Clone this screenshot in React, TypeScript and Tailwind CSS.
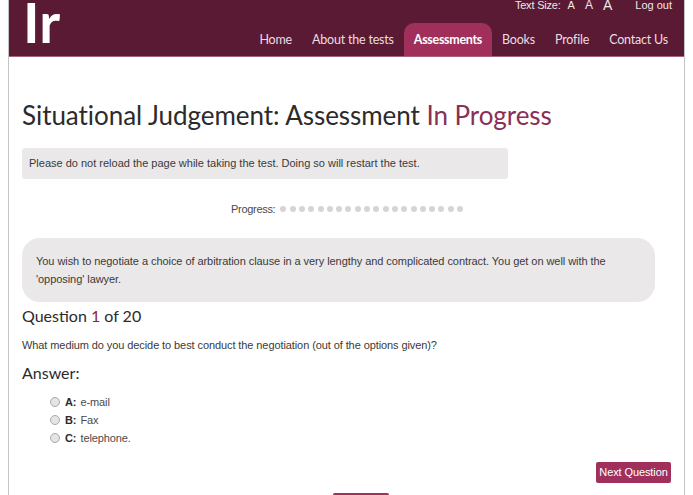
const navItems = ['Home', 'About the tests', 'Assessments', 'Books', 'Profile', 'Contact Us'];
const options = [
  { key: 'A:', text: 'e-mail' },
  { key: 'B:', text: 'Fax' },
  { key: 'C:', text: 'telephone.' },
];
const dots = Array.from({ length: 20 }, (_, i) => i);

const headingFont = "font-['Lato',sans-serif]";

export default function App() {
  return (
    <div className="h-[495px] overflow-hidden bg-white font-['Liberation_Sans',sans-serif]">
      <div className="mx-[8px] h-[495px] w-[677px] border-x border-x-[#c4c4c4]">
        {/* Header */}
        <header className="flex h-[57px] justify-between border-b border-b-[#a8617c] bg-[#5a1a33] text-white">
          <div className="ml-[14px] font-['Lato',sans-serif] text-[56px] leading-[44px] font-bold">Ir</div>
          <div className="flex flex-col items-end">
            <div className="flex h-[23px] items-start pr-[12px] text-[11px] leading-[10px] text-[#f1e6ea]">
              <span className="tracking-[-0.2px]">Text Size:</span>
              <span className="ml-[7px]">A</span>
              <span className="ml-[10px] text-[12px]">A</span>
              <span className="ml-[10px] text-[14px]">A</span>
              <span className="ml-[23px]">Log out</span>
            </div>
            <nav className={`flex h-[33px] pr-[6px] text-[12.5px] tracking-[-0.2px] text-[#eadde2] ${headingFont}`}>
              {navItems.map((item) => (
                <a
                  key={item}
                  className={
                    item === 'Assessments'
                      ? 'rounded-t-[10px] bg-[#a12f5c] px-[10px] pt-[8px] font-bold tracking-[-0.3px] text-white'
                      : 'px-[10px] pt-[8px]'
                  }
                >
                  {item}
                </a>
              ))}
            </nav>
          </div>
        </header>

        <main className="px-[13px]">
          <h1 className={`mt-[38px] text-[26px] leading-[40px] tracking-[-0.05px] text-[#2b2b2b] ${headingFont}`}>
            Situational Judgement: Assessment <span className="text-[#8a2f55]">In Progress</span>
          </h1>

          <div className="mt-[13px] h-[31px] w-[486px] rounded-[3px] bg-[#ebe8ea] pl-[7px] text-[11px] leading-[31px] text-[#3a3a3a]">
            Please do not reload the page while taking the test. Doing so will restart the test.
          </div>

          <div className="mt-[21px] flex h-[18px] items-center pl-[209px] text-[11px] text-[#4a4a4a]">
            <span className="mr-[5px] tracking-[-0.3px]">Progress:</span>
            <div className="flex gap-[3.3px]">
              {dots.map((dot) => (
                <span key={dot} className="h-[6px] w-[6px] rounded-full bg-[#d6d4d6]" />
              ))}
            </div>
          </div>

          <div className="mt-[20px] h-[64px] w-[633px] rounded-[18px] bg-[#ebe8ea] pt-[14px] pr-[20px] pl-[14px] text-[11px] leading-[18px] tracking-[-0.06px] text-[#3a3a3a]">
            You wish to negotiate a choice of arbitration clause in a very lengthy and complicated contract. You get on well with the 'opposing' lawyer.
          </div>

          <h2 className={`mt-[2px] text-[16px] leading-[24px] text-[#2b2b2b] ${headingFont}`}>
            Question <span className="text-[#8e1f3f]">1</span> of 20
          </h2>

          <p className="mt-[9px] text-[11px] leading-[16px] tracking-[-0.09px] text-[#3a3a3a]">
            What medium do you decide to best conduct the negotiation (out of the options given)?
          </p>

          <h2 className={`mt-[8px] text-[16px] leading-[24px] text-[#2b2b2b] ${headingFont}`}>Answer:</h2>

          <div className="mt-[8px] flex flex-col pl-[28px] text-[11px] leading-[18px] tracking-[-0.1px] text-[#4a4a4a]">
            {options.map((option) => (
              <label key={option.key} className="flex h-[18px] items-center">
                <span className="h-[10px] w-[10px] rounded-full border border-[#a9a9a9] bg-[#e4e4e4]" />
                <b className="ml-[5px] text-[#2b2b2b]">{option.key}</b>
                <span className="ml-[4px]">{option.text}</span>
              </label>
            ))}
          </div>

          <div className="mt-[15px] flex justify-end">
            <button className="h-[21px] w-[75px] rounded-[2px] bg-[#a02f5b] text-[11px] tracking-[-0.1px] text-white">Next Question</button>
          </div>

          <div className="mt-[10px] ml-[311px] h-[20px] w-[56px] rounded-t-[2px] bg-[#a02f5b]" />
        </main>
      </div>
    </div>
  );
}
